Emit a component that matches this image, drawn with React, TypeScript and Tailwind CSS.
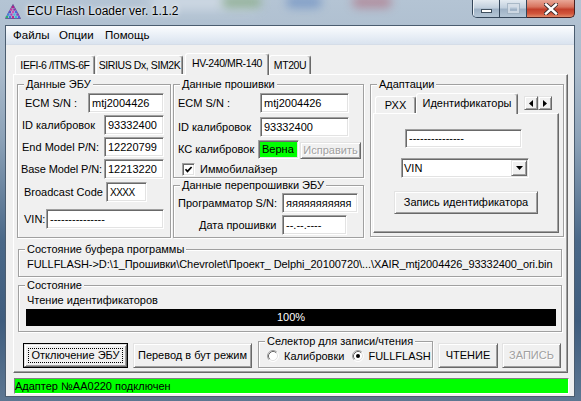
import React from "react";

const sunken =
  "border border-t-[#a0a0a0] border-l-[#a0a0a0] border-b-white border-r-white shadow-[inset_1px_1px_0_#696969,inset_-1px_-1px_0_#e3e3e3]";
const raised =
  "border border-t-[#e3e3e3] border-l-[#e3e3e3] border-b-[#696969] border-r-[#696969] shadow-[inset_1px_1px_0_#fff,inset_-1px_-1px_0_#a0a0a0]";
const etched = "border border-[#a0a0a0] shadow-[inset_1px_1px_0_#fff,1px_1px_0_#fff]";
const disabledText = "text-[#a0a0a0] [text-shadow:1px_1px_0_#fff]";

type P = { cls?: string; children?: React.ReactNode };

function Edit({ cls = "", children }: P) {
  return (
    <div className={`${sunken} ${cls} bg-white flex items-center pl-[3px] whitespace-nowrap overflow-hidden shrink-0`}>
      {children}
    </div>
  );
}

function Group({ title, cls = "", children }: P & { title: string }) {
  return (
    <div className={`relative ${etched} ${cls} shrink-0`}>
      <span className="absolute left-[6px] top-[-7px] px-[2px] bg-[#f0f0f0] leading-[13px] whitespace-nowrap">
        {title}
      </span>
      {children}
    </div>
  );
}

function Label({ cls = "", children }: P) {
  return <span className={`${cls} shrink-0 whitespace-nowrap`}>{children}</span>;
}

function Btn({ cls = "", children, disabled }: P & { disabled?: boolean }) {
  return (
    <div
      className={`${raised} ${cls} bg-[#f0f0f0] flex items-center justify-center whitespace-nowrap shrink-0 ${
        disabled ? disabledText : ""
      }`}
    >
      {children}
    </div>
  );
}

function Radio({ on }: { on?: boolean }) {
  return (
    <svg width="12" height="12" viewBox="0 0 12 12" className="shrink-0">
      <circle cx="6" cy="6" r="5" fill="#fff" />
      <path d="M2.11 9.89 A5.5 5.5 0 0 1 9.89 2.11" fill="none" stroke="#a0a0a0" strokeWidth="1" />
      <path d="M9.89 2.11 A5.5 5.5 0 0 1 2.11 9.89" fill="none" stroke="#ffffff" strokeWidth="1" />
      <path d="M2.82 9.18 A4.5 4.5 0 0 1 9.18 2.82" fill="none" stroke="#696969" strokeWidth="1" />
      <path d="M9.18 2.82 A4.5 4.5 0 0 1 2.82 9.18" fill="none" stroke="#e3e3e3" strokeWidth="1" />
      {on && <circle cx="6" cy="6" r="2" fill="#000" />}
    </svg>
  );
}

function Tab({ cls = "", sel, children }: P & { sel?: boolean }) {
  return (
    <div
      className={`${cls} shrink-0 flex items-center justify-center whitespace-nowrap bg-[#f0f0f0] border-t border-l border-r border-t-white border-l-white border-r-[#696969] shadow-[inset_-1px_0_0_#a0a0a0] rounded-t-[3px] ${
        sel ? "relative z-10 mb-[-1px] pb-[2px]" : ""
      }`}
    >
      {children}
    </div>
  );
}

function AppIcon() {
  const rows = [
    ["#b0208a"],
    ["#c23aa0", "#8a2bb0"],
    ["#5a4fd0", "#d24fb0", "#4a6ae0"],
    ["#3a8ae0", "#b03ab8", "#4ab0e0", "#8a3ac0"],
    ["#2ab070", "#3a7ae0", "#c02a90", "#3ac0d0", "#5a5ae0"],
  ];
  return (
    <svg width="16" height="15" viewBox="0 0 16 15" className="shrink-0">
      <path d="M8 0.5 L15.5 14.5 L0.5 14.5 Z" fill="none" stroke="#5a3a8a" strokeWidth="0.8" />
      {rows.map((r, i) =>
        r.map((c, j) => (
          <rect key={`${i}-${j}`} x={8 - (r.length * 3) / 2 + j * 3 + 0.3} y={2 + i * 2.5} width="2.2" height="2.2" fill={c} />
        ))
      )}
    </svg>
  );
}

export default function App() {
  return (
    <div className="w-[581px] h-[401px] overflow-hidden relative flex flex-col font-['Liberation_Sans',Arial,sans-serif] text-[11px] leading-[13px] text-black bg-[linear-gradient(180deg,#b4c4d4_0%,#a9bacb_18%,#8ba1b7_35%,#4a6888_60%,#3f5d7e_80%,#5d7792_100%)]">
      {/* title bar */}
      <div className="relative h-[25px] shrink-0 flex items-start overflow-hidden">
        <div className="absolute left-[150px] top-[-6px] w-[110px] h-[16px] rounded-full bg-[#dfe6ee] opacity-60 blur-[6px]" />
        <div className="absolute left-[222px] top-[-4px] w-[40px] h-[12px] rounded-full bg-[#6f9a6a] opacity-60 blur-[5px]" />
        <div className="absolute left-[286px] top-[-4px] w-[36px] h-[12px] rounded-full bg-[#5f86c0] opacity-60 blur-[5px]" />
        <div className="absolute left-[352px] top-[-4px] w-[40px] h-[12px] rounded-full bg-[#b05a6a] opacity-50 blur-[5px]" />
        <div className="relative ml-[5px] mt-[4px]">
          <AppIcon />
        </div>
        <span className="relative ml-[6px] mt-[4px] text-[12px] leading-[15px] whitespace-nowrap [text-shadow:0_0_6px_#fff,0_0_3px_#fff]">
          ECU Flash Loader ver. 1.1.2
        </span>
        <div className="relative ml-auto mr-[6px] flex h-[18px] shrink-0">
          <div className="flex h-[18px] rounded-bl-[5px] border border-t-0 border-[#34465a] overflow-hidden">
            <div className="w-[27px] h-full bg-[linear-gradient(180deg,#e3eaf1,#c2d0de_45%,#9fb2c6_55%,#b5c6d6)] border-r border-[#34465a] flex items-center justify-center shadow-[inset_1px_0_0_#eef3f7]">
              <div className="w-[11px] h-[4px] mt-[5px] bg-white border border-[#40505f]" />
            </div>
            <div className="w-[26px] h-full bg-[linear-gradient(180deg,#e3eaf1,#c2d0de_45%,#9fb2c6_55%,#b5c6d6)] flex items-center justify-center">
              <div className="w-[11px] h-[9px] border-[2px] border-t-[3px] border-[#d7dfe8] opacity-80 shadow-[0_0_0_1px_#9fb0c0]" />
            </div>
          </div>
          <div className="w-[48px] h-[18px] rounded-br-[5px] border border-t-0 border-l-0 border-[#4a2020] bg-[linear-gradient(180deg,#e9a797,#d8745f_40%,#c2402b_55%,#d2553b_80%,#e08a6a)] flex items-center justify-center">
            <svg width="14" height="12" viewBox="0 0 14 12">
              <path d="M2 1.5 L12 10.5 M12 1.5 L2 10.5" stroke="#3a2a2a" strokeWidth="4.2" strokeLinecap="square" />
              <path d="M2 1.5 L12 10.5 M12 1.5 L2 10.5" stroke="#ffffff" strokeWidth="2.4" strokeLinecap="square" />
            </svg>
          </div>
        </div>
      </div>

      {/* client */}
      <div className="ml-[5px] w-[570px] h-[372px] shrink-0 border border-[#4b5d70] bg-[#f0f0f0] flex flex-col">
        {/* menu */}
        <div className="h-[19px] shrink-0 grid grid-cols-[46px_46px_1fr] items-center pl-[7px] bg-[linear-gradient(180deg,#fbfcfe,#eaf0f7_50%,#dae3ef)] border-b border-[#d5dde8] text-[11.5px]">
          <span className="whitespace-nowrap">Файлы</span>
          <span className="whitespace-nowrap">Опции</span>
          <span className="whitespace-nowrap">Помощь</span>
        </div>

        {/* tabs */}
        <div className="relative z-10 flex items-end h-[21px] mt-[8px] pl-[9px] shrink-0 text-[10.5px] tracking-[-0.4px]">
          <Tab cls="w-[80px] h-[19px]">IEFI-6 /ITMS-6F</Tab>
          <Tab cls="w-[87px] h-[19px] ml-[1px]">SIRIUS Dx, SIM2K</Tab>
          <Tab cls="w-[84px] h-[22px] ml-[2px]" sel>
            HV-240/MR-140
          </Tab>
          <Tab cls="w-[42px] h-[19px]">MT20U</Tab>
        </div>

        {/* tab page */}
        <div className="ml-[7px] w-[555px] h-[299px] shrink-0 border border-t-white border-l-white border-r-[#696969] border-b-[#696969] shadow-[inset_-1px_-1px_0_#a0a0a0] flex flex-col">
          {/* row 1 */}
          <div className="flex items-start pt-[9px] pl-[3px]">
            <Group title="Данные ЭБУ" cls="w-[154px] h-[154px] flex flex-col">
              <div className="flex items-center h-[20px] mt-[8px]">
                <Label cls="w-[70px] pl-[7px]">ECM S/N :</Label>
                <Edit cls="w-[76px] h-[20px]">mtj2004426</Edit>
              </div>
              <div className="flex items-center h-[20px] mt-[2px]">
                <Label cls="w-[86px] pl-[4px]">ID калибровок</Label>
                <Edit cls="w-[60px] h-[20px]">93332400</Edit>
              </div>
              <div className="flex items-center h-[20px] mt-[2px]">
                <Label cls="w-[86px] pl-[4px]">End Model P/N:</Label>
                <Edit cls="w-[60px] h-[20px]">12220799</Edit>
              </div>
              <div className="flex items-center h-[20px] mt-[2px]">
                <Label cls="w-[86px] pl-[3px] tracking-[-0.1px]">Base Model P/N:</Label>
                <Edit cls="w-[60px] h-[20px]">12213220</Edit>
              </div>
              <div className="flex items-center h-[20px] mt-[3px]">
                <Label cls="w-[88px] pl-[6px]">Broadcast Code</Label>
                <Edit cls="w-[41px] h-[20px] text-[10px] tracking-[-0.5px]">XXXX</Edit>
              </div>
              <div className="flex items-center h-[20px] mt-[7px]">
                <Label cls="w-[28px] pl-[6px]">VIN:</Label>
                <Edit cls="w-[118px] h-[20px]">---------------</Edit>
              </div>
            </Group>

            <div className="ml-[2px] w-[191px] flex flex-col shrink-0">
              <Group title="Данные прошивки" cls="w-[191px] h-[94px] flex flex-col">
                <div className="flex items-center h-[20px] mt-[8px]">
                  <Label cls="w-[86px] pl-[4px]">ECM S/N :</Label>
                  <Edit cls="w-[89px] h-[20px]">mtj2004426</Edit>
                </div>
                <div className="flex items-center h-[20px] mt-[4px]">
                  <Label cls="w-[86px] pl-[4px]">ID калибровок</Label>
                  <Edit cls="w-[89px] h-[20px]">93332400</Edit>
                </div>
                <div className="flex items-end h-[19px] mt-[3px]">
                  <Label cls="w-[84px] pl-[4px] self-center">КС калибровок</Label>
                  <div className={`${sunken} w-[41px] h-[19px] bg-[#00ff00] flex items-center pl-[3px] shrink-0`}>
                    Верна
                  </div>
                  <Btn cls="ml-[1px] w-[61px] h-[17px]" disabled>
                    Исправить
                  </Btn>
                </div>
                <div className="flex items-center h-[13px] mt-[4px] pl-[8px]">
                  <div className={`${sunken} w-[13px] h-[13px] bg-white shrink-0 flex items-center justify-center`}>
                    <svg width="9" height="9" viewBox="0 0 9 9">
                      <path d="M1.5 4.2 L3.5 6.4 L7.6 2" fill="none" stroke="#000" strokeWidth="1.7" />
                    </svg>
                  </div>
                  <Label cls="ml-[5px]">Иммобилайзер</Label>
                </div>
              </Group>
              <Group title="Данные перепрошивки ЭБУ" cls="mt-[7px] w-[191px] h-[53px] flex flex-col">
                <div className="flex items-center h-[20px] mt-[7px]">
                  <Label cls="w-[108px] pl-[4px]">Программатор S/N:</Label>
                  <Edit cls="w-[76px] h-[20px]">яяяяяяяяяяя</Edit>
                </div>
                <div className="flex items-center h-[20px] mt-[2px]">
                  <Label cls="w-[108px] pl-[25px]">Дата прошивки</Label>
                  <Edit cls="w-[65px] h-[20px]">--.--.----</Edit>
                </div>
              </Group>
            </div>

            <Group title="Адаптации" cls="ml-[6px] w-[194px] h-[153px] flex flex-col">
              <div className="relative z-10 flex items-end h-[20px] mt-[8px] pl-[4px]">
                <Tab cls="w-[41px] h-[17px]">РХХ</Tab>
                <Tab cls="w-[102px] h-[21px]" sel>
                  Идентификаторы
                </Tab>
                <div className="self-start mt-[3px] ml-[6px] flex">
                  <Btn cls="w-[14px] h-[14px]">
                    <svg width="4" height="7" viewBox="0 0 4 7">
                      <path d="M4 0 L0 3.5 L4 7 Z" fill="#000" />
                    </svg>
                  </Btn>
                  <Btn cls="w-[14px] h-[14px]">
                    <svg width="4" height="7" viewBox="0 0 4 7">
                      <path d="M0 0 L4 3.5 L0 7 Z" fill="#000" />
                    </svg>
                  </Btn>
                </div>
              </div>
              <div className="ml-[2px] w-[186px] h-[120px] border border-t-white border-l-white border-r-[#696969] border-b-[#696969] shadow-[inset_-1px_-1px_0_#a0a0a0] flex flex-col">
                <Edit cls="mt-[15px] ml-[31px] w-[117px] h-[19px]">---------------</Edit>
                <div className={`${sunken} mt-[10px] ml-[27px] w-[128px] h-[20px] bg-white flex items-center p-[1px] shrink-0`}>
                  <span className="flex-1 pl-[1px]">VIN</span>
                  <Btn cls="w-[16px] h-[16px]">
                    <svg width="7" height="4" viewBox="0 0 7 4">
                      <path d="M0 0 L7 0 L3.5 4 Z" fill="#000" />
                    </svg>
                  </Btn>
                </div>
                <Btn cls="mt-[13px] ml-[20px] w-[144px] h-[23px]">Запись идентификатора</Btn>
              </div>
            </Group>
          </div>

          {/* row 2 */}
          <Group title="Состояние буфера программы" cls="mt-[11px] ml-[4px] w-[544px] h-[28px]">
            <div className="pt-[8px] pl-[8px] whitespace-nowrap tracking-[-0.06px]">
              {"FULLFLASH->D:\\1_Прошивки\\Chevrolet\\Проект_ Delphi_20100720\\...\\XAIR_mtj2004426_93332400_ori.bin"}
            </div>
          </Group>

          {/* row 3 */}
          <Group title="Состояние" cls="mt-[8px] ml-[4px] w-[544px] h-[47px] flex flex-col">
            <div className="pt-[8px] pl-[8px] whitespace-nowrap">Чтение идентификаторов</div>
            <div className="mt-[2px] ml-[7px] w-[530px] h-[17px] bg-black text-white flex items-center justify-center">
              100%
            </div>
          </Group>

          {/* row 4 */}
          <div className="mt-[8px] h-[28px] flex items-end">
            <div className="ml-[9px] w-[105px] h-[25px] border border-black shrink-0">
              <div className={`${raised} relative w-full h-full bg-[#f0f0f0] flex items-center justify-center whitespace-nowrap`}>
                <span className="absolute left-[3px] top-[3px] right-[3px] bottom-[3px] border border-dotted border-black" />
                Отключение ЭБУ
              </div>
            </div>
            <Btn cls="ml-[5px] w-[119px] h-[25px]">Перевод в бут режим</Btn>
            <Group title="Селектор для записи/чтения" cls="ml-[6px] w-[175px] h-[27px]">
              <div className="flex items-center h-[12px] mt-[8px] pl-[8px]">
                <Radio />
                <Label cls="ml-[5px]">Калибровки</Label>
                <div className="ml-[8px] flex">
                  <Radio on />
                </div>
                <Label cls="ml-[4px]">FULLFLASH</Label>
              </div>
            </Group>
            <Btn cls="ml-[5px] w-[60px] h-[25px]">ЧТЕНИЕ</Btn>
            <Btn cls="ml-[4px] w-[59px] h-[25px]" disabled>
              ЗАПИСЬ
            </Btn>
          </div>
        </div>

        {/* status bar */}
        <div className="ml-[8px] mt-[5px] w-[555px] h-[16px] shrink-0 bg-[#00ff00] border border-t-[#808080] border-l-[#808080] border-b-white border-r-white flex items-center whitespace-nowrap">
          Адаптер №АА0220 подключен
        </div>
      </div>
    </div>
  );
}
